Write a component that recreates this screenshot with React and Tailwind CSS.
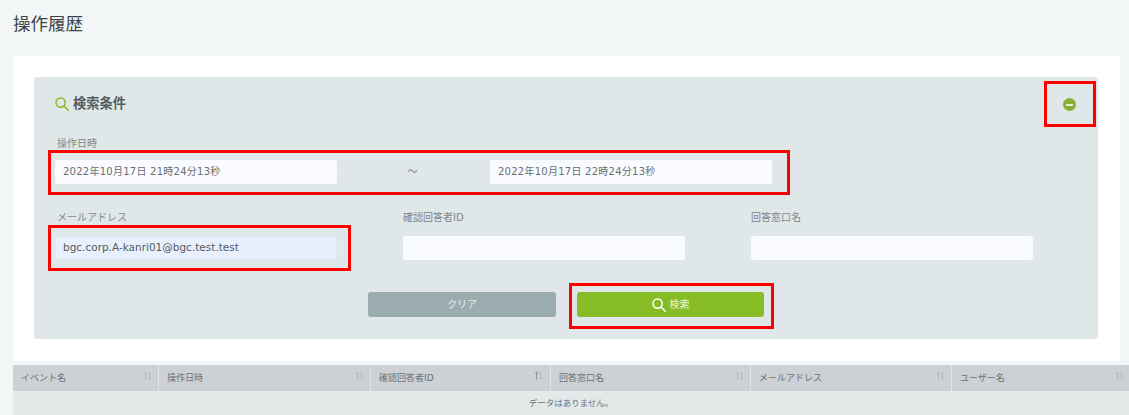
import React from 'react';

const columns = [
  { label: 'イベント名', width: 'w-[146px]', sortX: 'mr-[6px]' },
  { label: '操作日時', width: 'w-[212px]', sortX: 'mr-[6px]' },
  { label: '確認回答者ID', width: 'w-[180px]', sortX: 'mr-[7px]', active: true },
  { label: '回答窓口名', width: 'w-[200px]', sortX: 'mr-[6px]' },
  { label: 'メールアドレス', width: 'w-[201px]', sortX: 'mr-[6px]' },
  { label: 'ユーザー名', width: 'flex-1', sortX: 'mr-[5px]' },
];

// lens is bigger and handle longer than the lucide one
const SearchIcon = ({ className, strokeWidth = 1.5 }) => (
  <svg width="14" height="14" viewBox="0 0 14 14" fill="none" stroke="currentColor" strokeWidth={strokeWidth} className={className}>
    <circle cx="5.6" cy="5.6" r="4.6" />
    <path d="M9 9L13.2 13.2" strokeLinecap="round" />
  </svg>
);

const SortIcon = ({ active }) => (
  <svg width="9" height="9" viewBox="0 0 9 9" fill="none" strokeWidth="1" className={active ? 'stroke-[#8c9298]' : 'stroke-[#b5bac0]'}>
    <path d="M2.5 8.5V1M1 2.5L2.5 1L4 2.5" />
    <path d="M6.5 .5V8M5 6.5L6.5 8L8 6.5" className="stroke-[#b5bac0]" />
  </svg>
);

const Field = ({ label, value, email }) => (
  <div className="w-[282px]">
    <label className={`block h-[16px] text-[10px] leading-[16px] text-[#7f8689] ${email ? 'pl-[2px]' : ''}`}>{label}</label>
    <div className={`mt-[10px] flex h-[24px] items-center rounded-[3px] text-[10.5px] text-[#555c60] ${email ? 'bg-[#e8f0fe] border border-[#e3e9f2] px-[7px]' : 'bg-[#f9fbfe] px-2'}`}>
      {value}
    </div>
  </div>
);

const Highlight = ({ className }) => (
  <div className={`absolute border-[3px] border-[#ff0000] ${className}`} />
);

const App = () => {
  return (
    <div className="relative h-[415px] overflow-hidden bg-[#f2f6f7] font-['DejaVu_Sans','Noto_Sans_CJK_JP',sans-serif]">
      <h1 className="h-[56px] pl-[13px] pt-[12px] text-[17.5px] leading-[22px] font-normal text-[#3d4347] font-['Noto_Sans_CJK_JP',sans-serif]">操作履歴</h1>

      {/* Search card */}
      <div className="mr-[9px] ml-[13px] h-[305px] rounded-[3px] bg-white py-[21px] pr-[22px] pl-[21px]">
        <div className="h-[262px] rounded-[3px] bg-[#e0e7e9] pt-[17px] pl-[21px]">
          <div className="flex h-[20px] items-center gap-[4px] text-[13.25px] font-bold text-[#555c60] font-['Noto_Sans_CJK_JP',sans-serif]">
            <SearchIcon className="text-[#86bc25]" />
            <span className="mb-[2px]">検索条件</span>
          </div>

          <div className="mt-[22px]">
            <label className="block h-[16px] pl-[2px] text-[10px] leading-[16px] text-[#7f8689]">操作日時</label>
            <div className="mt-[8px] flex items-center">
              <div className="flex h-[24px] w-[282px] items-center rounded-[3px] bg-[#f9fbfe] px-2 pb-[2px] text-[10px] tracking-[0.25px] text-[#6b6e70]">2022年10月17日 21時24分13秒</div>
              <span className="w-[153px] pr-[2px] pb-[2px] text-center text-[10px] text-[#7f8689]">～</span>
              <div className="flex h-[24px] w-[282px] items-center rounded-[3px] bg-[#f9fbfe] px-2 pb-[2px] text-[10px] tracking-[0.25px] text-[#6b6e70]">2022年10月17日 22時24分13秒</div>
            </div>
          </div>

          <div className="mt-[26px] flex gap-[66px]">
            <Field label="メールアドレス" value="bgc.corp.A-kanri01@bgc.test.test" email />
            <Field label="確認回答者ID" value="" />
            <Field label="回答窓口名" value="" />
          </div>

          <div className="mt-[32px] -ml-[21px] flex justify-center gap-[21px]">
            <button className="h-[25px] w-[188px] rounded-[3px] bg-[#9aacaf] text-[10px] text-[#e6ecec]">クリア</button>
            <button className="flex h-[25px] w-[187px] items-center justify-center gap-[4px] rounded-[3px] bg-[#86bc25] text-[10px] text-[#f0f6e2]">
              <SearchIcon className="text-white" />
              検索
            </button>
          </div>
        </div>
      </div>

      {/* Results table */}
      <div className="mt-[4px] ml-[13px]">
        <div className="flex h-[26px] bg-[#cdd0d4]">
          {columns.map((col) => (
            <div key={col.label} className={`flex ${col.width} items-center justify-between border-r border-[#e0e4e6] pl-[8px] text-[9px] text-[#6b7175] last:border-r-0`}>
              <span className="mt-[2px]">{col.label}</span>
              <span className={`${col.sortX} mb-[5px]`}><SortIcon active={col.active} /></span>
            </div>
          ))}
        </div>
        <div className="h-[24px] bg-[#e4e8e9] pt-[5px] text-center text-[8.5px] leading-[14px] text-[#6b7175]">データはありません。</div>
      </div>

      {/* Annotation boxes drawn over the screenshot */}
      <Highlight className="top-[81px] left-[1044px] h-[46px] w-[52px]" />
      <Highlight className="top-[150px] left-[48px] h-[45px] w-[742px]" />
      <Highlight className="top-[225px] left-[48px] h-[46px] w-[303px]" />
      <Highlight className="top-[283px] left-[569px] h-[46px] w-[205px]" />

      {/* Collapse toggle */}
      <div className="absolute top-[98px] left-[1063px] flex h-[13px] w-[13px] items-center justify-center rounded-full bg-[#86b030]">
        <div className="h-[2px] w-[7px] bg-[#e6ecdc]" />
      </div>
    </div>
  );
};

export default App;
